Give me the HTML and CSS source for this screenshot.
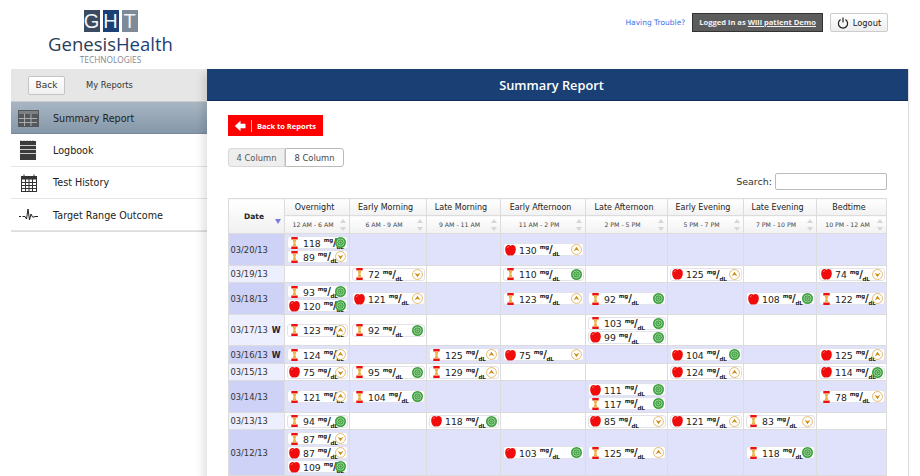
FILE: index.html
```html
<!DOCTYPE html>
<html lang="en">
<head>
  <meta charset="UTF-8">
  <title>Summary Report</title>
  <link rel="stylesheet" href="styles.css">
</head>
<body>
  <!-- Icons used by the report pills -->
  <svg class="defs" aria-hidden="true">
    <symbol id="apple" viewBox="0 0 12 12">
      <path d="M6 1.400C7.800 -.1 11.800 .4 11.800 5.200 11.800 9 9.400 12.100 7.400 12 6.600 11.900 6.400 11.600 6 11.600S5.200 12 4.400 12C2.400 12.100 .2 9 .2 5.400 .2 .4 4.200 -.1 6 1.400Z" fill="#f00c0c"/>
      <path d="M2.400 3.600C2.800 2.800 3.400 2.400 4.200 2.400" stroke="#ff8a80" fill="none"/>
    </symbol>
    <symbol id="core" viewBox="0 0 8 12">
      <path d="M.8 0H7.200V2.600H.8ZM.8 9.400H7.200V12H.8Z" fill="#ee1111"/>
      <path d="M2 2.600H6L4.900 6 6 9.400H2L3.100 6Z" fill="#e9b44c"/>
    </symbol>
    <symbol id="target" viewBox="0 0 12 12">
      <circle cx="6" cy="6" r="6" fill="#3d9f3d"/>
      <circle cx="6" cy="6" r="3.900" fill="none" stroke="#a6d8a6"/>
      <circle cx="6" cy="6" r="1.700" fill="none" stroke="#a6d8a6"/>
    </symbol>
    <symbol id="high" viewBox="0 0 12 12">
      <circle cx="6" cy="6" r="5.400" fill="#fff" stroke="#e3b45c"/>
      <path d="M2.800 7.800 6 3 9.200 7.800 6 6.400Z" fill="#c98a12"/>
    </symbol>
    <symbol id="low" viewBox="0 0 12 12">
      <circle cx="6" cy="6" r="5.400" fill="#fff" stroke="#e3b45c"/>
      <path d="M2.800 4.200 6 9 9.200 4.200 6 5.600Z" fill="#c98a12"/>
    </symbol>
  </svg>

  <header class="top">
    <div class="logo">
      <div class="logo-tiles"><span class="tile-g">G</span><span class="tile-h">H</span><span class="tile-t">T</span></div>
      <div class="logo-name">Genesis<span>Health</span></div>
      <div class="logo-sub">TECHNOLOGIES</div>
    </div>
    <div class="top-links">
      <a class="trouble" href="#">Having Trouble?</a>
      <div class="logged">Logged in as <u>Will patient Demo</u></div>
      <button class="logout">
        <svg width="12" height="12" viewBox="0 0 12 12"><path d="M3.600 2.600A4.600 4.600 0 1 0 8.400 2.600M6 .6V5.600" fill="none" stroke="#222" stroke-width="1.200"/></svg>
        Logout
      </button>
    </div>
  </header>

  <div class="wrap">
    <aside class="side">
      <div class="side-head">
        <button class="back">Back</button>
        <span>My Reports</span>
      </div>
      <a class="nav active" href="#">
        <svg width="21" height="17" viewBox="0 0 21 17"><rect width="21" height="17" fill="#55585a"/><rect x="1" y="1" width="19" height="3" fill="#7b8084"/><path d="M1 8.500H19M1 12.500H19M6.500 4V16M13 4V16" stroke="#a9adaf"/></svg>
        Summary Report
      </a>
      <a class="nav" href="#">
        <svg width="21" height="20" viewBox="0 0 21 20"><rect x="2" y="1" width="16" height="19" fill="#3b3b3b"/><path d="M2 5.500H18M2 9.500H18M2 13.500H18" stroke="#ccc"/><path d="M3 .5V2M6 .5V2M9 .5V2M12 .5V2M15 .5V2" stroke="#333"/></svg>
        Logbook
      </a>
      <a class="nav" href="#">
        <svg width="21" height="18" viewBox="0 0 21 18"><rect x="3.500" y="2.500" width="15" height="15" fill="#fff" stroke="#333"/><rect x="3.500" y="2.500" width="15" height="3" fill="#333"/><path d="M3.500 8.500H18M3.500 11.500H18M3.500 14.500H18M7.500 5V17M11 5V17M14.500 5V17" stroke="#333"/><path d="M6 .5V3M16 .5V3" stroke="#333"/></svg>
        Test History
      </a>
      <a class="nav" href="#">
        <svg width="21" height="14" viewBox="0 0 21 14"><path d="M1 8.500H3M4.500 8.500H7L8.500 11 10 1 11.500 12 13 6 14.500 9H16L17 8.500H20" fill="none" stroke="#222"/></svg>
        Target Range Outcome
      </a>
    </aside>

    <main class="panel">
      <h1 class="panel-title">Summary Report</h1>
      <div class="panel-body">
        <a class="back-reports" href="#">
          <svg width="12" height="12" viewBox="0 0 12 12"><path d="M6.500 .8V3.800H11.500V8.200H6.500V11.200L.8 6Z" fill="#fff"/></svg>
          <span>Back to Reports</span>
        </a>
        <div class="col-switch">
          <button class="col-btn">4 Column</button>
          <button class="col-btn on">8 Column</button>
        </div>
        <div class="search">
          <label for="q">Search:</label>
          <input id="q" type="text">
        </div>

        <table class="report">
          <colgroup>
            <col class="c-date"><col class="c1"><col class="c2"><col class="c3"><col class="c4"><col class="c5"><col class="c6"><col class="c7"><col class="c8">
          </colgroup>
          <thead>
            <tr>
              <th class="date-head" rowspan="2">Date<i class="sort-down"></i></th>
              <th>Overnight</th><th>Early Morning</th><th>Late Morning</th><th>Early Afternoon</th><th>Late Afternoon</th><th>Early Evening</th><th>Late Evening</th><th>Bedtime</th>
            </tr>
            <tr class="times">
              <th>12 AM - 6 AM<i></i></th><th>6 AM - 9 AM<i></i></th><th>9 AM - 11 AM<i></i></th><th>11 AM - 2 PM<i></i></th><th>2 PM - 5 PM<i></i></th><th>5 PM - 7 PM<i></i></th><th>7 PM - 10 PM<i></i></th><th>10 PM - 12 AM<i></i></th>
            </tr>
          </thead>
          <tbody>
            <tr class="odd">
              <td class="date">03/20/13</td>
              <td>
                <div class="pill"><svg class="meal"><use href="#core"/></svg><b>118</b><span class="unit"><sup>mg</sup>/<sub>dL</sub></span><svg class="flag"><use href="#target"/></svg></div>
                <div class="pill"><svg class="meal"><use href="#core"/></svg><b>89</b><span class="unit"><sup>mg</sup>/<sub>dL</sub></span><svg class="flag"><use href="#low"/></svg></div>
              </td>
              <td></td><td></td>
              <td><div class="pill"><svg class="meal"><use href="#apple"/></svg><b>130</b><span class="unit"><sup>mg</sup>/<sub>dL</sub></span><svg class="flag"><use href="#high"/></svg></div></td>
              <td></td><td></td><td></td><td></td>
            </tr>
            <tr>
              <td class="date">03/19/13</td>
              <td></td>
              <td><div class="pill"><svg class="meal"><use href="#core"/></svg><b>72</b><span class="unit"><sup>mg</sup>/<sub>dL</sub></span><svg class="flag"><use href="#low"/></svg></div></td>
              <td></td>
              <td><div class="pill"><svg class="meal"><use href="#core"/></svg><b>110</b><span class="unit"><sup>mg</sup>/<sub>dL</sub></span><svg class="flag"><use href="#target"/></svg></div></td>
              <td></td>
              <td><div class="pill"><svg class="meal"><use href="#apple"/></svg><b>125</b><span class="unit"><sup>mg</sup>/<sub>dL</sub></span><svg class="flag"><use href="#high"/></svg></div></td>
              <td></td>
              <td><div class="pill"><svg class="meal"><use href="#apple"/></svg><b>74</b><span class="unit"><sup>mg</sup>/<sub>dL</sub></span><svg class="flag"><use href="#low"/></svg></div></td>
            </tr>
            <tr class="odd">
              <td class="date">03/18/13</td>
              <td>
                <div class="pill"><svg class="meal"><use href="#core"/></svg><b>93</b><span class="unit"><sup>mg</sup>/<sub>dL</sub></span><svg class="flag"><use href="#target"/></svg></div>
                <div class="pill"><svg class="meal"><use href="#apple"/></svg><b>120</b><span class="unit"><sup>mg</sup>/<sub>dL</sub></span><svg class="flag"><use href="#target"/></svg></div>
              </td>
              <td><div class="pill"><svg class="meal"><use href="#apple"/></svg><b>121</b><span class="unit"><sup>mg</sup>/<sub>dL</sub></span><svg class="flag"><use href="#high"/></svg></div></td>
              <td></td>
              <td><div class="pill"><svg class="meal"><use href="#core"/></svg><b>123</b><span class="unit"><sup>mg</sup>/<sub>dL</sub></span><svg class="flag"><use href="#high"/></svg></div></td>
              <td><div class="pill"><svg class="meal"><use href="#core"/></svg><b>92</b><span class="unit"><sup>mg</sup>/<sub>dL</sub></span><svg class="flag"><use href="#target"/></svg></div></td>
              <td></td>
              <td><div class="pill"><svg class="meal"><use href="#apple"/></svg><b>108</b><span class="unit"><sup>mg</sup>/<sub>dL</sub></span><svg class="flag"><use href="#target"/></svg></div></td>
              <td><div class="pill"><svg class="meal"><use href="#core"/></svg><b>122</b><span class="unit"><sup>mg</sup>/<sub>dL</sub></span><svg class="flag"><use href="#high"/></svg></div></td>
            </tr>
            <tr>
              <td class="date">03/17/13<em>W</em></td>
              <td><div class="pill"><svg class="meal"><use href="#core"/></svg><b>123</b><span class="unit"><sup>mg</sup>/<sub>dL</sub></span><svg class="flag"><use href="#high"/></svg></div></td>
              <td><div class="pill"><svg class="meal"><use href="#core"/></svg><b>92</b><span class="unit"><sup>mg</sup>/<sub>dL</sub></span><svg class="flag"><use href="#target"/></svg></div></td>
              <td></td><td></td>
              <td>
                <div class="pill"><svg class="meal"><use href="#core"/></svg><b>103</b><span class="unit"><sup>mg</sup>/<sub>dL</sub></span><svg class="flag"><use href="#target"/></svg></div>
                <div class="pill"><svg class="meal"><use href="#apple"/></svg><b>99</b><span class="unit"><sup>mg</sup>/<sub>dL</sub></span><svg class="flag"><use href="#target"/></svg></div>
              </td>
              <td></td><td></td><td></td>
            </tr>
            <tr class="odd">
              <td class="date">03/16/13<em>W</em></td>
              <td><div class="pill"><svg class="meal"><use href="#core"/></svg><b>124</b><span class="unit"><sup>mg</sup>/<sub>dL</sub></span><svg class="flag"><use href="#high"/></svg></div></td>
              <td></td>
              <td><div class="pill"><svg class="meal"><use href="#core"/></svg><b>125</b><span class="unit"><sup>mg</sup>/<sub>dL</sub></span><svg class="flag"><use href="#high"/></svg></div></td>
              <td><div class="pill"><svg class="meal"><use href="#apple"/></svg><b>75</b><span class="unit"><sup>mg</sup>/<sub>dL</sub></span><svg class="flag"><use href="#low"/></svg></div></td>
              <td></td>
              <td><div class="pill"><svg class="meal"><use href="#apple"/></svg><b>104</b><span class="unit"><sup>mg</sup>/<sub>dL</sub></span><svg class="flag"><use href="#target"/></svg></div></td>
              <td></td>
              <td><div class="pill"><svg class="meal"><use href="#apple"/></svg><b>125</b><span class="unit"><sup>mg</sup>/<sub>dL</sub></span><svg class="flag"><use href="#high"/></svg></div></td>
            </tr>
            <tr>
              <td class="date">03/15/13</td>
              <td><div class="pill"><svg class="meal"><use href="#apple"/></svg><b>75</b><span class="unit"><sup>mg</sup>/<sub>dL</sub></span><svg class="flag"><use href="#low"/></svg></div></td>
              <td><div class="pill"><svg class="meal"><use href="#core"/></svg><b>95</b><span class="unit"><sup>mg</sup>/<sub>dL</sub></span><svg class="flag"><use href="#target"/></svg></div></td>
              <td><div class="pill"><svg class="meal"><use href="#core"/></svg><b>129</b><span class="unit"><sup>mg</sup>/<sub>dL</sub></span><svg class="flag"><use href="#high"/></svg></div></td>
              <td></td><td></td>
              <td><div class="pill"><svg class="meal"><use href="#apple"/></svg><b>124</b><span class="unit"><sup>mg</sup>/<sub>dL</sub></span><svg class="flag"><use href="#high"/></svg></div></td>
              <td></td>
              <td><div class="pill"><svg class="meal"><use href="#apple"/></svg><b>114</b><span class="unit"><sup>mg</sup>/<sub>dL</sub></span><svg class="flag"><use href="#target"/></svg></div></td>
            </tr>
            <tr class="odd">
              <td class="date">03/14/13</td>
              <td><div class="pill"><svg class="meal"><use href="#core"/></svg><b>121</b><span class="unit"><sup>mg</sup>/<sub>dL</sub></span><svg class="flag"><use href="#high"/></svg></div></td>
              <td><div class="pill"><svg class="meal"><use href="#core"/></svg><b>104</b><span class="unit"><sup>mg</sup>/<sub>dL</sub></span><svg class="flag"><use href="#target"/></svg></div></td>
              <td></td><td></td>
              <td>
                <div class="pill"><svg class="meal"><use href="#apple"/></svg><b>111</b><span class="unit"><sup>mg</sup>/<sub>dL</sub></span><svg class="flag"><use href="#target"/></svg></div>
                <div class="pill"><svg class="meal"><use href="#core"/></svg><b>117</b><span class="unit"><sup>mg</sup>/<sub>dL</sub></span><svg class="flag"><use href="#target"/></svg></div>
              </td>
              <td></td><td></td>
              <td><div class="pill"><svg class="meal"><use href="#core"/></svg><b>78</b><span class="unit"><sup>mg</sup>/<sub>dL</sub></span><svg class="flag"><use href="#low"/></svg></div></td>
            </tr>
            <tr>
              <td class="date">03/13/13</td>
              <td><div class="pill"><svg class="meal"><use href="#core"/></svg><b>94</b><span class="unit"><sup>mg</sup>/<sub>dL</sub></span><svg class="flag"><use href="#target"/></svg></div></td>
              <td></td>
              <td><div class="pill"><svg class="meal"><use href="#apple"/></svg><b>118</b><span class="unit"><sup>mg</sup>/<sub>dL</sub></span><svg class="flag"><use href="#target"/></svg></div></td>
              <td></td>
              <td><div class="pill"><svg class="meal"><use href="#apple"/></svg><b>85</b><span class="unit"><sup>mg</sup>/<sub>dL</sub></span><svg class="flag"><use href="#low"/></svg></div></td>
              <td><div class="pill"><svg class="meal"><use href="#apple"/></svg><b>121</b><span class="unit"><sup>mg</sup>/<sub>dL</sub></span><svg class="flag"><use href="#high"/></svg></div></td>
              <td><div class="pill"><svg class="meal"><use href="#core"/></svg><b>83</b><span class="unit"><sup>mg</sup>/<sub>dL</sub></span><svg class="flag"><use href="#low"/></svg></div></td>
              <td></td>
            </tr>
            <tr class="odd">
              <td class="date">03/12/13</td>
              <td>
                <div class="pill"><svg class="meal"><use href="#core"/></svg><b>87</b><span class="unit"><sup>mg</sup>/<sub>dL</sub></span><svg class="flag"><use href="#low"/></svg></div>
                <div class="pill"><svg class="meal"><use href="#apple"/></svg><b>87</b><span class="unit"><sup>mg</sup>/<sub>dL</sub></span><svg class="flag"><use href="#low"/></svg></div>
                <div class="pill"><svg class="meal"><use href="#apple"/></svg><b>109</b><span class="unit"><sup>mg</sup>/<sub>dL</sub></span><svg class="flag"><use href="#target"/></svg></div>
              </td>
              <td></td><td></td>
              <td><div class="pill"><svg class="meal"><use href="#apple"/></svg><b>103</b><span class="unit"><sup>mg</sup>/<sub>dL</sub></span><svg class="flag"><use href="#target"/></svg></div></td>
              <td><div class="pill"><svg class="meal"><use href="#core"/></svg><b>125</b><span class="unit"><sup>mg</sup>/<sub>dL</sub></span><svg class="flag"><use href="#high"/></svg></div></td>
              <td></td>
              <td><div class="pill"><svg class="meal"><use href="#core"/></svg><b>118</b><span class="unit"><sup>mg</sup>/<sub>dL</sub></span><svg class="flag"><use href="#target"/></svg></div></td>
              <td></td>
            </tr>
          </tbody>
        </table>
      </div>
    </main>
  </div>
</body>
</html>
```

FILE: styles.css
```css
html, body {
  margin: 0;
  padding: 0;
  height: 476px;
  overflow: hidden;
  background-color: #fff;
  font-family: "DejaVu Sans", sans-serif;
  color: #333;
}

.defs {
  display: none;
}

a {
  text-decoration: none;
  color: inherit;
}

/* Top bar */
.top {
  height: 69px;
  display: flex;
  justify-content: space-between;
  padding: 0 32px 0 48px;
}

.logo {
  width: 125px;
  padding-top: 10px;
  display: flex;
  flex-direction: column;
  align-items: center;
}

.logo-tiles {
  display: flex;
  gap: 3px;
  height: 22px;
}

.logo-tiles span {
  width: 16px;
  color: #f2f4f7;
  font: 20px/22px "Liberation Sans", sans-serif;
  text-align: center;
}

.tile-g { background-color: #3b4a60; }
.tile-h { background-color: #1a3f75; }
.tile-t { background-color: #7f8a98; }

.logo-name {
  margin-top: 1px;
  font: 18.500px/21px "Open Sans", sans-serif;
  color: #2b3d58;
  white-space: nowrap;
}

.logo-name span {
  color: #1a3f75;
}

.logo-sub {
  margin-top: 1px;
  font: 8.300px/9px "Open Sans", sans-serif;
  color: #7f8894;
}

.top-links {
  display: flex;
  align-items: flex-start;
  padding-top: 13px;
}

.trouble {
  margin: 5px 7px 0 0;
  font-size: 7.500px;
  color: #3f6fe8;
}

.logged {
  height: 17px;
  padding: 0 6px;
  border: 1px solid #333;
  background-color: #5c5c5c;
  color: #f2f2f2;
  font: bold 7.600px/16px "Open Sans", sans-serif;
}

.logout {
  width: 58px;
  height: 19px;
  margin-left: 7px;
  padding: 0;
  display: flex;
  align-items: center;
  justify-content: center;
  gap: 4px;
  border: 1px solid #ccc;
  border-radius: 2px;
  background: linear-gradient(#fff, #eee);
  font: 8.300px "DejaVu Sans", sans-serif;
  color: #222;
}

/* Sidebar and report panel */
.wrap {
  display: flex;
  align-items: flex-start;
  padding: 0 11px;
}

.side {
  width: 196px;
  flex: none;
  border-bottom: 1px solid #ddd;
  background-color: #fff;
}

.side-head {
  height: 32px;
  display: flex;
  align-items: center;
  gap: 21px;
  padding-left: 17px;
  background-color: #e6e6e6;
  border-bottom: 1px solid #ccc;
  font-size: 8.400px;
}

.back {
  width: 37px;
  height: 19px;
  padding: 0;
  border: 1px solid #c4c4c4;
  border-radius: 2px;
  background: linear-gradient(#fff, #f0f0f0);
  font: 9px "DejaVu Sans", sans-serif;
  color: #333;
}

.nav {
  height: 30.330px;
  display: flex;
  align-items: center;
  gap: 14px;
  padding: 1px 0 0 7px;
  border-bottom: 1px solid #e4e4e4;
  font-size: 9.600px;
  color: #222;
}

.nav.active {
  background: linear-gradient(#a8b6c3, #8597a9);
  border-bottom-color: #77899b;
}

.panel {
  position: relative;
  flex: 1;
  height: 407px;
  border-right: 1px solid #ddd;
  background-color: #fff;
  box-shadow: -4px 4px 8px rgba(0, 0, 0, 0.12);
}

.panel-title {
  height: 32px;
  margin: 0;
  padding-right: 12px;
  background-color: #1a3f75;
  border-bottom: 1px solid #122f5a;
  box-sizing: border-box;
  color: #fff;
  font: 600 12.800px/32px "Open Sans", sans-serif;
  text-align: center;
}

.panel-body {
  padding: 14px 21px 0 21px;
}

.back-reports {
  width: 95px;
  height: 21px;
  display: flex;
  align-items: center;
  gap: 5px;
  padding-left: 6px;
  box-sizing: border-box;
  background-color: #f00;
  color: #fff;
  font: bold 7.500px "Open Sans", sans-serif;
}

.back-reports span {
  padding-left: 5px;
  border-left: 1px solid #ffb0b0;
  line-height: 12px;
}

.col-switch {
  display: flex;
  margin-top: 12px;
}

.col-btn {
  height: 19px;
  width: 57px;
  padding: 0;
  border: 1px solid #d8d8d8;
  border-radius: 3px 0 0 3px;
  background-color: #eee;
  font: 8.400px "DejaVu Sans", sans-serif;
  color: #555;
}

.col-btn.on {
  width: 59px;
  border: 1px solid #bbb;
  border-radius: 0 3px 3px 0;
  background-color: #fff;
  color: #444;
}

.search {
  display: flex;
  justify-content: flex-end;
  align-items: center;
  gap: 3px;
  margin-top: 6px;
  font-size: 9.500px;
}

.search input {
  width: 112px;
  height: 17px;
  padding: 0;
  box-sizing: border-box;
  border: 1px solid #bbb;
  border-radius: 2px;
}

/* Report table */
.report {
  width: 658px;
  margin-top: 8px;
  table-layout: fixed;
  border-collapse: collapse;
  font-size: 8px;
}

.c-date { width: 56px; }
.c1 { width: 65px; }
.c2 { width: 77px; }
.c3 { width: 74px; }
.c4 { width: 85px; }
.c5 { width: 82px; }
.c6 { width: 76px; }
.c7 { width: 73px; }
.c8 { width: 70px; }

.report th,
.report td {
  border: 1px solid #dcdcdc;
  padding: 0;
}

.report th {
  position: relative;
  height: 16px;
  padding-right: 5px;
  background: linear-gradient(#fff, #f1f1f1);
  font-weight: normal;
  color: #222;
}

.report .date-head {
  padding-right: 5px;
  font-size: 7.500px;
  font-weight: bold;
  background: linear-gradient(#fff, #f0f0f0);
}

.sort-down {
  position: absolute;
  right: 3px;
  top: 20px;
  border: 3px solid transparent;
  border-top: 5px solid #7a7ae0;
  border-bottom: 0;
}

.times th {
  height: 17px;
  padding-right: 8px;
  font-size: 6.200px;
  color: #444;
}

/* small up and down sort arrows */
.times th i {
  position: absolute;
  right: 3px;
  top: 4px;
  width: 6px;
  height: 10px;
}

.times th i::before,
.times th i::after {
  content: "";
  position: absolute;
  left: 0;
  border: 3px solid transparent;
}

.times th i::before {
  top: -1px;
  border-top: 0;
  border-bottom: 4px solid #d6d6d6;
}

.times th i::after {
  bottom: -1px;
  border-bottom: 0;
  border-top: 4px solid #d6d6d6;
}

.report td {
  padding: 2px 1px 1.500px 2px;
  vertical-align: middle;
}

.report td.date {
  padding-left: 1.500px;
  background-color: #eeeffe;
  font-size: 8.300px;
  color: #333;
}

.report td.date em {
  padding-left: 4px;
  font-size: 8px;
  font-style: normal;
  font-weight: bold;
  color: #223;
}

.odd td {
  background-color: #e0e2fc;
}

.odd td.date {
  background-color: #cfd2f7;
}

.pill {
  height: 11px;
  padding: 0 1px;
  display: flex;
  align-items: center;
  border: 1px solid #e2e2ea;
  border-radius: 3px;
  background-color: #fff;
}

.pill + .pill {
  margin-top: 1px;
}

.meal {
  width: 11px;
  height: 12px;
  flex: none;
}

.pill b {
  margin: 1px 0 0 3px;
  font-weight: normal;
  font-size: 9.300px;
  color: #222;
}

/* mg over dL, kept narrow so it can run under the flag icon */
.unit {
  flex: 0 1 15px;
  min-width: 0;
  margin-left: 3px;
  font-size: 10px;
  line-height: 9px;
  font-weight: bold;
  letter-spacing: -0.200px;
  color: #222;
  white-space: nowrap;
}

.unit sup,
.unit sub {
  font-size: 5.500px;
  font-weight: bold;
  line-height: 0;
}

.flag {
  width: 11px;
  height: 11px;
  flex: none;
  margin-left: auto;
}
```
